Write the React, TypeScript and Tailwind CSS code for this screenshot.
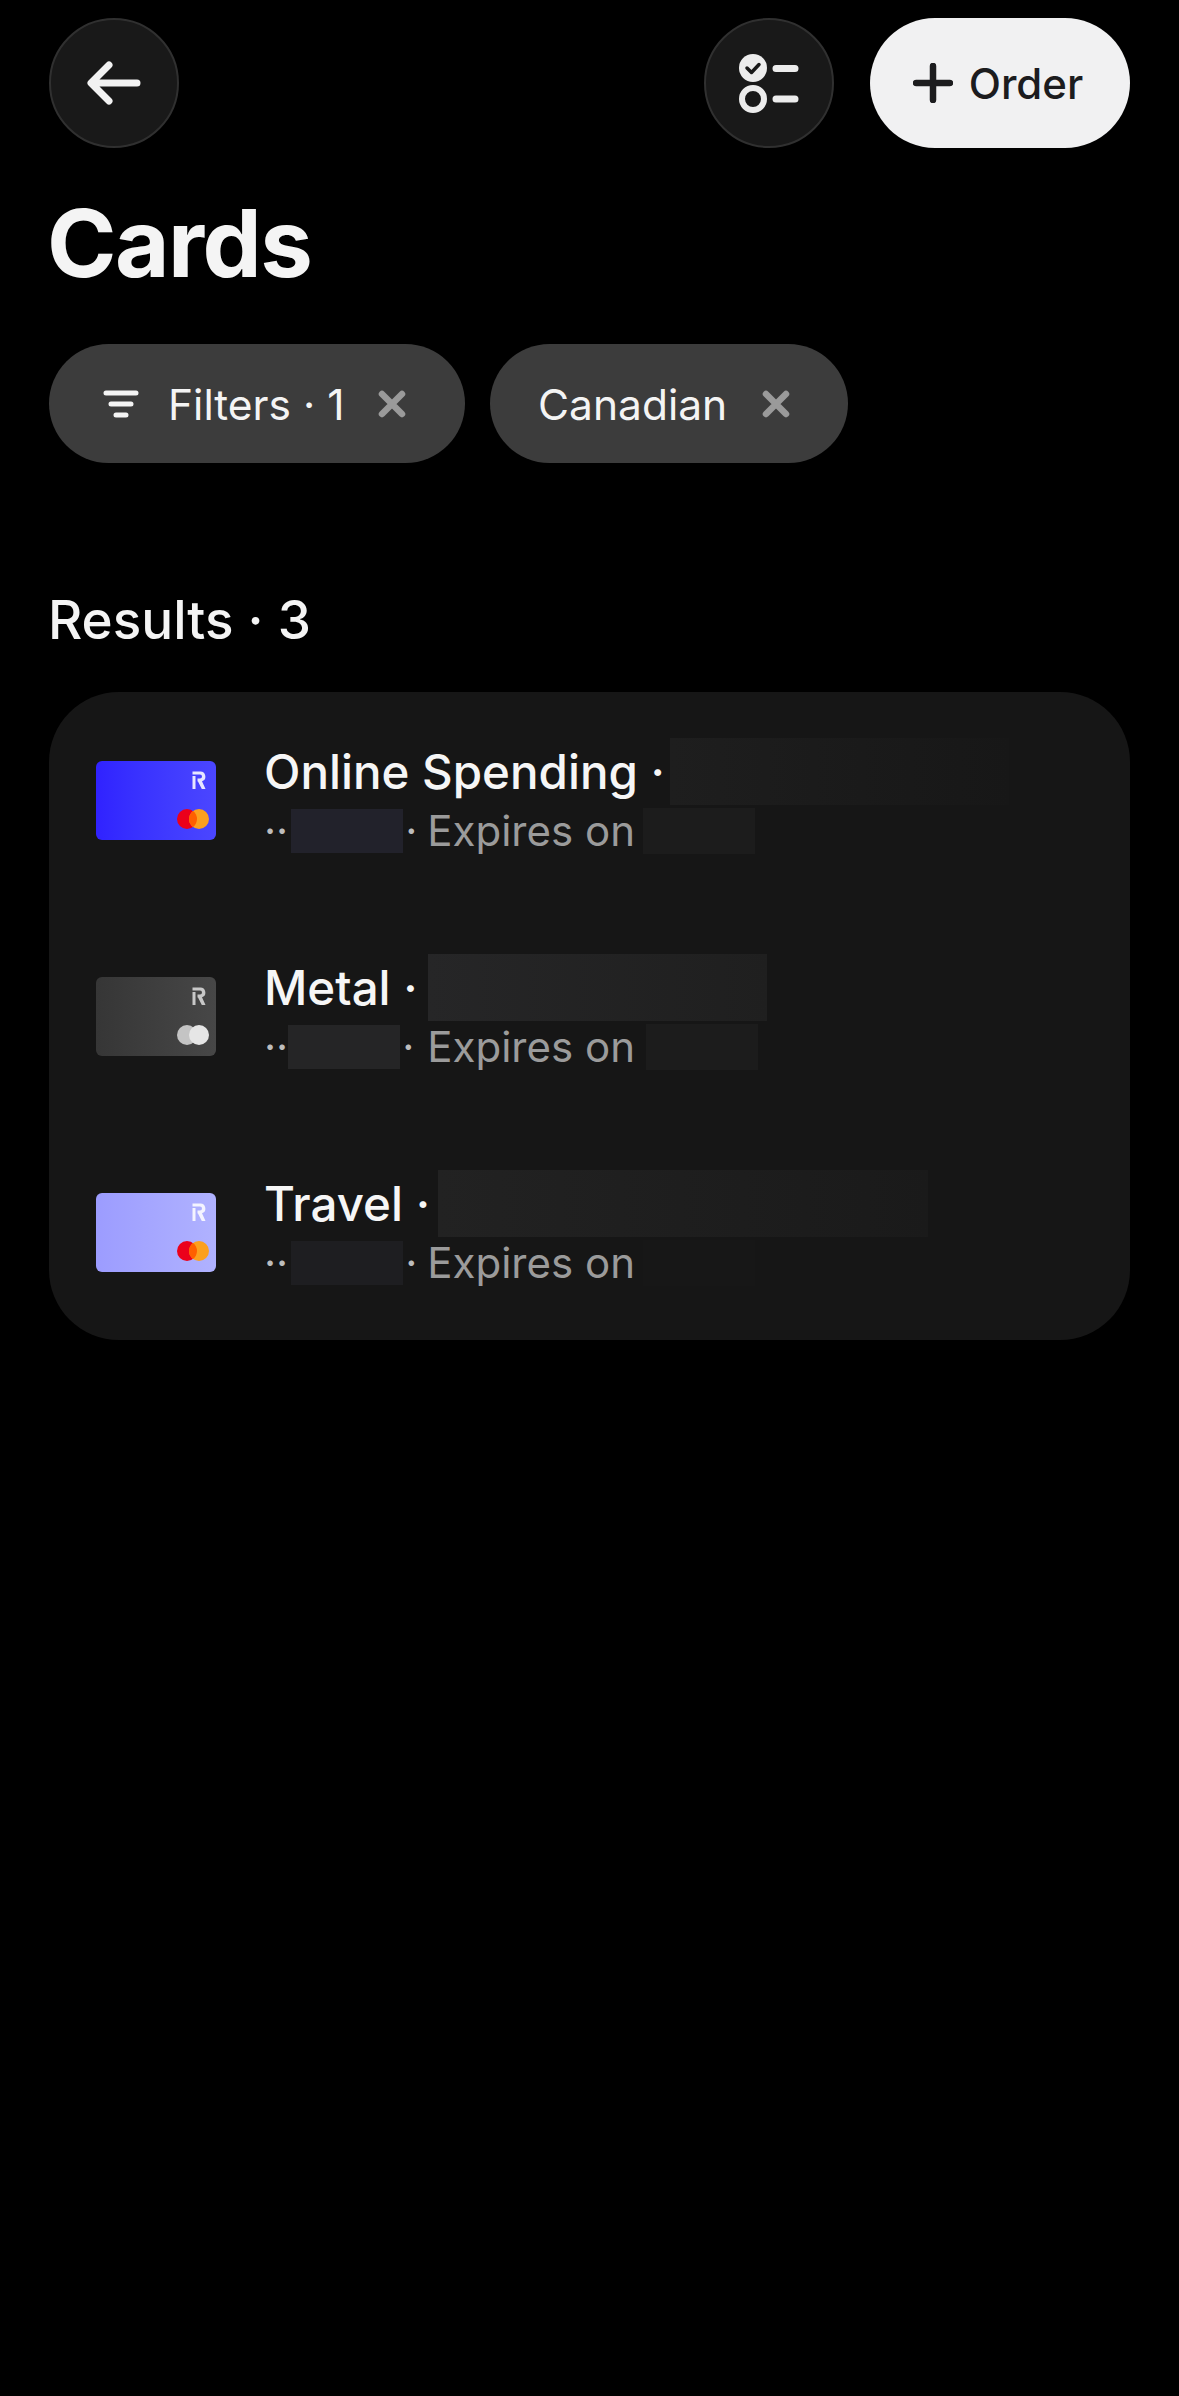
const font = "font-['Inter',sans-serif]";

function RoundButton({ children }: { children: React.ReactNode }) {
  return (
    <button className="flex h-[130px] w-[130px] items-center justify-center rounded-full border-2 border-[#303030] bg-[#191919]">
      {children}
    </button>
  );
}

function CloseIcon() {
  return (
    <svg width="30" height="30" viewBox="0 0 30 30" fill="none" stroke="#9a9a9a" strokeWidth="6.500" strokeLinecap="round">
      <path d="M5 5l20 20M25 5L5 25" />
    </svg>
  );
}

function Pill({ className, children }: { className: string; children: React.ReactNode }) {
  return (
    <div className={`flex h-[119px] items-center rounded-[60px] bg-[#3c3c3c] text-[42.500px] leading-none text-[#f4f4f4] ${className}`}>
      {children}
    </div>
  );
}

function Redact({ w, h, className }: { w: number; h: string; className: string }) {
  return <span className={`inline-block shrink-0 ${h} ${className}`} style={{ width: w }} />;
}

function MiniCard({ bg, r, metal }: { bg: string; r: string; metal?: boolean }) {
  return (
    <div className={`flex h-[79px] w-[120px] shrink-0 flex-col items-end justify-between rounded-[6px] pt-[10px] pr-[7px] pb-[11px] ${bg}`}>
      <svg className={`mr-[3px] ${r}`} width="14" height="18" viewBox="0 0 14 18" fill="currentColor">
        <rect x="0.500" y="5" width="3" height="13" />
        <path d="M0.500 0.500H8a5 5 0 0 1 2 9.700L13.500 18H9.800L6 10.500H5.500V7.500H8a2 2 0 0 0 0-4H0.500z" />
      </svg>
      <svg width="32" height="20" viewBox="0 0 32 20">
        {metal ? (
          <>
            <circle cx="10" cy="10" r="10" fill="#c4c4c4" />
            <circle cx="22" cy="10" r="10" fill="#e6e6e6" />
          </>
        ) : (
          <>
            <circle cx="10" cy="10" r="10" fill="#eb001b" />
            <circle cx="22" cy="10" r="10" fill="#fca01e" />
            <path d="M16 2a10 10 0 0 1 0 16a10 10 0 0 1 0-16z" fill="#ff5f00" />
          </>
        )}
      </svg>
    </div>
  );
}

const rows = [
  {
    name: "Online Spending",
    bg: "bg-gradient-to-r from-[#3022ff] to-[#4b46ff]",
    r: "text-[#e6e6ff]",
    titleW: 339,
    titleGap: "ml-[5px]",
    titleBg: "bg-gradient-to-r from-[#1e1e1e] to-[#171717]",
    numBg: "bg-[#22222b]",
    numGap: "ml-[3px]",
    dotGap: "mr-[10px]",
    expGap: "ml-[8px]",
    expBg: "bg-[#1c1c1c]",
  },
  {
    name: "Metal",
    bg: "bg-gradient-to-r from-[#363636] to-[#474747]",
    r: "text-[#c8c8c8]",
    metal: true,
    titleW: 339,
    titleGap: "ml-[10px]",
    titleBg: "bg-gradient-to-r from-[#262627] to-[#1f1f1f]",
    numBg: "bg-[#252526]",
    numGap: "ml-[0px]",
    dotGap: "mr-[13px]",
    expGap: "ml-[11px]",
    expBg: "bg-[#1c1c1c]",
  },
  {
    name: "Travel",
    bg: "bg-gradient-to-r from-[#9c9cff] to-[#b0b2ff]",
    r: "text-[#f4f4ff]",
    titleW: 490,
    titleGap: "ml-[8px]",
    titleBg: "bg-gradient-to-r from-[#222222] to-[#1a1a1a]",
    numBg: "bg-[#1e1e21]",
    numGap: "ml-[3px]",
    dotGap: "mr-[10px]",
    expGap: "ml-[8px]",
    expBg: "bg-[#171717]",
  },
];

export default function App() {
  return (
    <div className={`h-[2396px] w-[1179px] overflow-hidden bg-black px-[49px] pt-[18px] ${font}`}>
      <header className="flex items-center justify-between">
        <RoundButton>
          <svg width="54" height="44" viewBox="0 0 54 44" fill="none" stroke="#f2f2f2" strokeWidth="7" strokeLinecap="round" strokeLinejoin="round">
            <path d="M50 22H5M22 4L4 22l18 18" />
          </svg>
        </RoundButton>
        <div className="flex items-center gap-[36px]">
          <RoundButton>
            <svg width="60" height="60" viewBox="0 0 60 60" fill="none">
              <circle cx="14" cy="15" r="14" fill="#ececec" />
              <path d="M8 15l4.500 4.500L20 11.500" stroke="#191919" strokeWidth="3.500" strokeLinecap="round" strokeLinejoin="round" />
              <circle cx="14" cy="46" r="11" stroke="#ececec" strokeWidth="6" />
              <path d="M37 15.500h19M37 46h19" stroke="#ececec" strokeWidth="7" strokeLinecap="round" />
            </svg>
          </RoundButton>
          <button className="flex h-[130px] w-[260px] items-center justify-center gap-[16px] rounded-[65px] bg-[#f1f1f2] pr-[4px] text-[42px] font-medium text-[#1c1c1e]">
            <svg width="40" height="40" viewBox="0 0 40 40" fill="none" stroke="#1c1c1e" strokeWidth="6.500" strokeLinecap="round">
              <path d="M20 3v34M3 20h34" />
            </svg>
            Order
          </button>
        </div>
      </header>

      <h1 className="mt-[40px] -ml-[2px] text-[94px] leading-[110px] font-bold tracking-[-1.500px] text-[#f4f4f4]">Cards</h1>

      <div className="mt-[46px] flex gap-[25px]">
        <Pill className="w-[416px] pl-[54px]">
          <svg width="36" height="30" viewBox="0 0 36 30" fill="none" stroke="#f4f4f4" strokeWidth="5" strokeLinecap="round">
            <path d="M3 4h30M8 15h20M13 26h10" />
          </svg>
          <span className="ml-[29px] pt-[3px]">Filters · 1</span>
          <span className="ml-[33px]"><CloseIcon /></span>
        </Pill>
        <Pill className="w-[358px] pl-[48px]">
          <span className="pt-[3px]">Canadian</span>
          <span className="ml-[34px]"><CloseIcon /></span>
        </Pill>
      </div>

      <h2 className="mt-[127px] -ml-[1px] text-[53px] leading-[60px] font-medium text-[#f4f4f4]">Results · 3</h2>

      <section className="mt-[42px] rounded-[70px] bg-[#161616]">
        {rows.map((row) => (
          <div key={row.name} className="flex h-[216px] items-center pl-[47px]">
            <MiniCard bg={row.bg} r={row.r} metal={row.metal} />
            <div className="mb-[5px] ml-[48px] flex flex-col">
              <div className="flex h-[66px] items-center text-[47.500px] leading-none font-medium text-[#f6f6f6]">
                {row.name} ·
                <Redact w={row.titleW} h="h-[67px]" className={`${row.titleGap} ${row.titleBg}`} />
              </div>
              <div className="flex h-[52px] items-center text-[42px] leading-none text-[#9b9b9b]">
                <span className="text-[#bdbdbd]">··</span>
                <Redact w={112} h="h-[44px]" className={`${row.numGap} ${row.numBg}`} />
                <span className={`ml-[2px] text-[#bdbdbd] ${row.dotGap}`}>·</span>
                Expires on
                <Redact w={112} h="h-[46px]" className={`${row.expGap} ${row.expBg}`} />
              </div>
            </div>
          </div>
        ))}
      </section>
    </div>
  );
}
